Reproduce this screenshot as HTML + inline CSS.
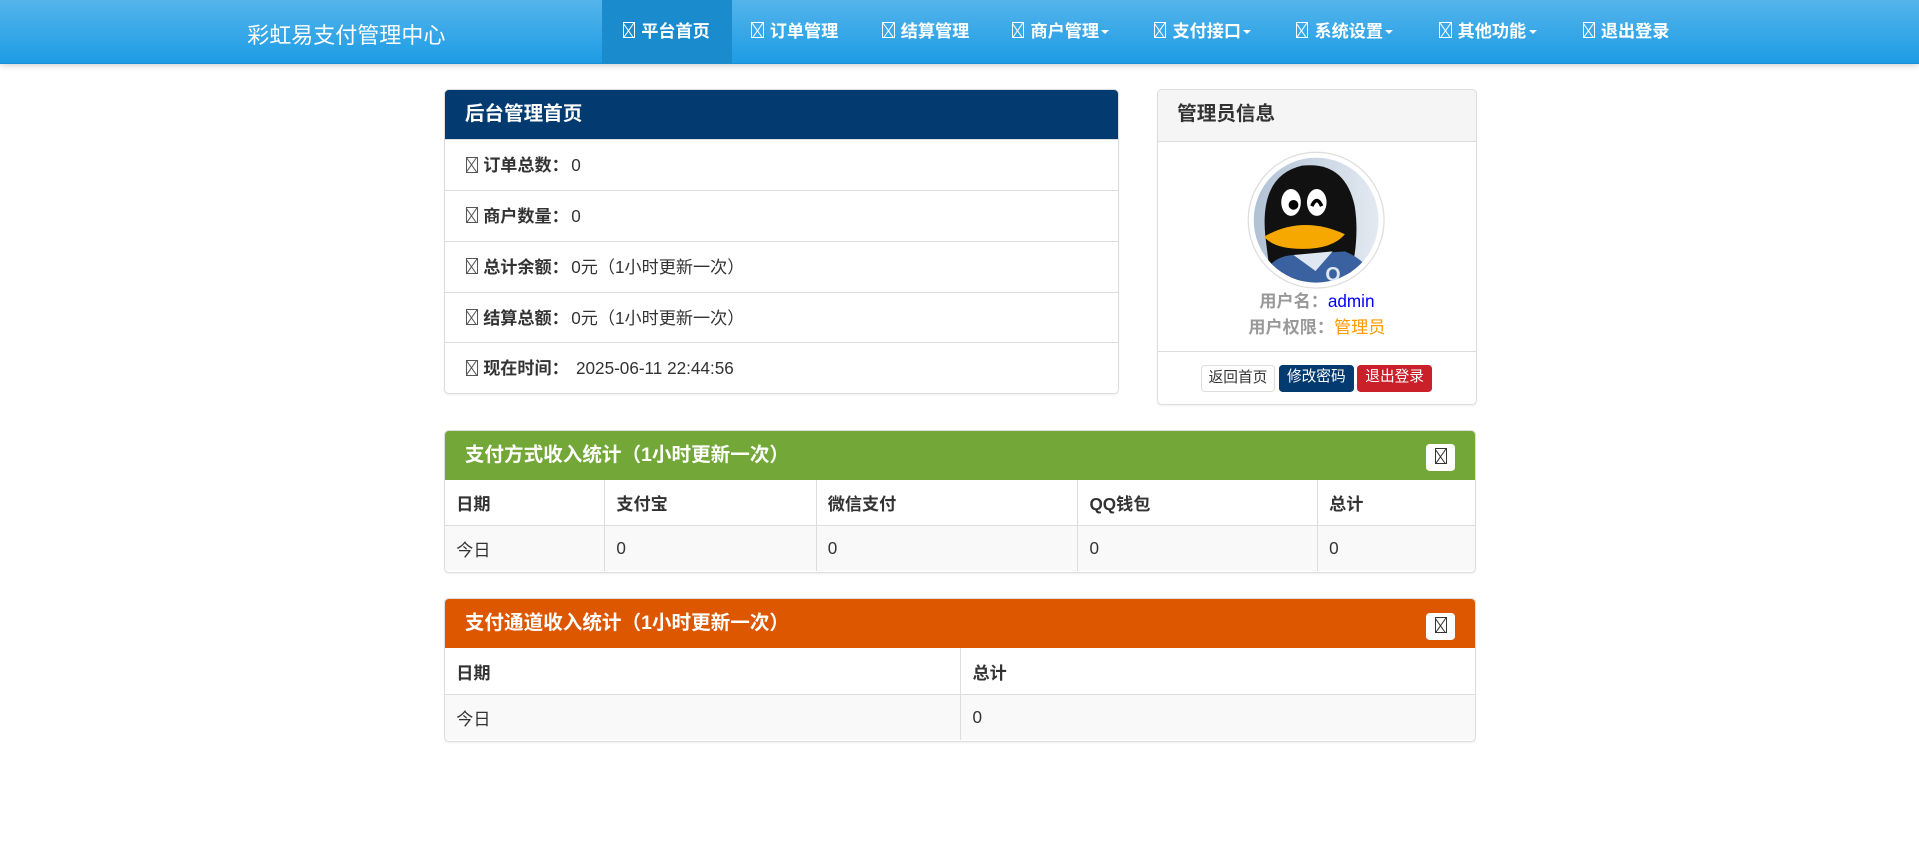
<!DOCTYPE html>
<html><head><meta charset="utf-8"><style>
html,body{margin:0;padding:0;background:#fff;overflow:hidden}
body{width:1919px;height:867px}
#z{zoom:1.2239;position:relative;width:1568px;height:708px;font-family:"Liberation Sans","Noto Sans CJK SC",sans-serif;font-size:14px;color:#333}
.a{position:absolute}
.nav{left:0;top:0;width:1568px;height:52px;background:linear-gradient(#54b4eb,#1d9ce5);box-shadow:0 1px 6px rgba(0,0,0,.25);border-bottom:1px solid #1a8fd6;box-sizing:border-box}
.brand{left:202px;top:15px;font-size:18px;color:#fff}
.ni{top:0;height:52px;line-height:52px;color:#fff;font-size:14px;font-weight:bold}
.ic{display:inline-block;width:10px;height:13px;border:1px solid currentColor;box-sizing:border-box;vertical-align:-1px;margin-right:5px;position:relative;overflow:hidden;font-weight:normal}
.ic:before,.ic:after{content:"";position:absolute;left:3.5px;top:-2px;width:1px;height:16px;background:currentColor;transform:rotate(35deg)}
.ic:after{transform:rotate(-35deg)}
.car{display:inline-block;border-top:4px solid #fff;border-left:4px solid transparent;border-right:4px solid transparent;vertical-align:middle;margin-left:2px}
.panel{border:1px solid #ddd;border-radius:4px;box-sizing:border-box;background:#fff;box-shadow:0 1px 1px rgba(0,0,0,.05);overflow:hidden}
.ph{height:40px;line-height:40px;padding-left:16px;font-size:16px;font-weight:bold;color:#fff;position:relative}
.row{height:41.5px;line-height:41px;border-top:1px solid #ddd;padding-left:17px;box-sizing:border-box}
.row .ic{color:#555;margin-right:4px}
.row b{margin-right:2px}
table{border-collapse:collapse;width:100%}
td,th{border:1px solid #ddd;text-align:left;padding:0 9px;height:37px;font-size:14px}
tr:first-child th{border-top:0}
td:first-child,th:first-child{border-left:0}
td:last-child,th:last-child{border-right:0}
tr:last-child td{border-bottom:0;background:#f9f9f9}
.sb{position:absolute;right:16px;top:11px;width:24px;height:22px;background:#fff;border-radius:3px;color:#333;line-height:22px;text-align:center}
.sb .ic{margin:0}
.btn{position:absolute;top:298px;height:22px;line-height:21px;font-size:12px;text-align:center;border-radius:3px;box-sizing:border-box;width:61px}
</style></head><body><div id="z">
<div class="a nav"></div>
<div class="a brand">彩虹易支付管理中心</div>
<div class="a" style="left:492px;top:0;width:106px;height:52px;background:#1a8bcd"></div>
<div class="a ni" style="left:509px"><span class="ic"></span>平台首页</div>
<div class="a ni" style="left:614px"><span class="ic"></span>订单管理</div>
<div class="a ni" style="left:721px"><span class="ic"></span>结算管理</div>
<div class="a ni" style="left:827px"><span class="ic"></span>商户管理<span class="car"></span></div>
<div class="a ni" style="left:943px"><span class="ic"></span>支付接口<span class="car"></span></div>
<div class="a ni" style="left:1059px"><span class="ic"></span>系统设置<span class="car"></span></div>
<div class="a ni" style="left:1176px"><span class="ic"></span>其他功能<span class="car"></span></div>
<div class="a ni" style="left:1293px"><span class="ic"></span>退出登录</div>

<div class="a panel" style="left:363px;top:73px;width:551px;height:249px">
<div class="ph" style="background:#033a6f">后台管理首页</div>
<div class="row"><span class="ic"></span><b>订单总数：</b>0</div>
<div class="row"><span class="ic"></span><b>商户数量：</b>0</div>
<div class="row"><span class="ic"></span><b>总计余额：</b>0元（1小时更新一次）</div>
<div class="row"><span class="ic"></span><b>结算总额：</b>0元（1小时更新一次）</div>
<div class="row"><span class="ic"></span><b>现在时间：</b> 2025-06-11 22:44:56</div>
</div>

<div class="a panel" style="left:945px;top:73px;width:262px;height:258px">
<div class="ph" style="background:#f5f5f5;color:#333;border-bottom:1px solid #ddd;height:41px;font-weight:bold">管理员信息</div>
<div class="a" style="left:0;top:213px;width:262px;border-top:1px solid #ddd"></div>
</div>
<svg class="a" style="left:1019px;top:123px" width="113" height="113" viewBox="0 0 113 113">
<defs><clipPath id="c"><circle cx="56.5" cy="56.5" r="51"/></clipPath><linearGradient id="g" x1="0" x2="1"><stop offset="0" stop-color="#aebfd3"/><stop offset="1" stop-color="#e6ecf3"/></linearGradient></defs>
<circle cx="56.5" cy="56.5" r="55.5" fill="#fff" stroke="#ddd"/>
<g clip-path="url(#c)"><rect width="113" height="113" fill="url(#g)"/>
<path d="M15 70 Q10 20 45 12 Q80 8 88 45 Q92 70 85 100 L20 110 Z" fill="#111"/>
<path d="M10 113 Q15 85 40 85 L80 82 Q100 90 110 113 Z" fill="#3b62a0"/>
<path d="M38 85 L56 98 L70 82 Z" fill="#dfe8f2"/>
<ellipse cx="36" cy="42" rx="8" ry="11" fill="#fff"/><ellipse cx="57" cy="42" rx="8" ry="11" fill="#fff"/>
<circle cx="38" cy="44" r="4" fill="#000"/><path d="M53 45 Q57 36 61 45" stroke="#000" stroke-width="3" fill="none"/>
<path d="M14 70 Q45 52 80 68 Q70 80 45 80 Q22 80 14 70Z" fill="#f7a800"/>
<text x="64" y="106" font-size="16" fill="#dfe8f2" font-family="Liberation Sans,sans-serif" font-weight="bold">Q</text></g></svg>
<div class="a" style="left:945px;width:262px;top:236px;text-align:center;line-height:21px;font-weight:bold;color:#999">用户名：<span style="color:#00f;font-weight:normal">admin</span><br>用户权限：<span style="color:#f90;font-weight:normal">管理员</span></div>
<div class="btn" style="left:981px;border:1px solid #ddd;background:#fff;color:#333">返回首页</div>
<div class="btn" style="left:1045px;background:#033a6f;color:#fff">修改密码</div>
<div class="btn" style="left:1109px;background:#c9202a;color:#fff">退出登录</div>

<div class="a panel" style="left:363px;top:351px;width:843px;height:117px">
<div class="ph" style="background:#73a839">支付方式收入统计（1小时更新一次）<span class="sb"><span class="ic"></span></span></div>
<table><tr><th style="width:112px">日期</th><th style="width:154px">支付宝</th><th style="width:195px">微信支付</th><th style="width:177px">QQ钱包</th><th>总计</th></tr>
<tr><td>今日</td><td>0</td><td>0</td><td>0</td><td>0</td></tr></table>
</div>

<div class="a panel" style="left:363px;top:489px;width:843px;height:117px">
<div class="ph" style="background:#dd5600">支付通道收入统计（1小时更新一次）<span class="sb"><span class="ic"></span></span></div>
<table><tr><th style="width:403px">日期</th><th>总计</th></tr>
<tr><td>今日</td><td>0</td></tr></table>
</div>
</div></body></html>
